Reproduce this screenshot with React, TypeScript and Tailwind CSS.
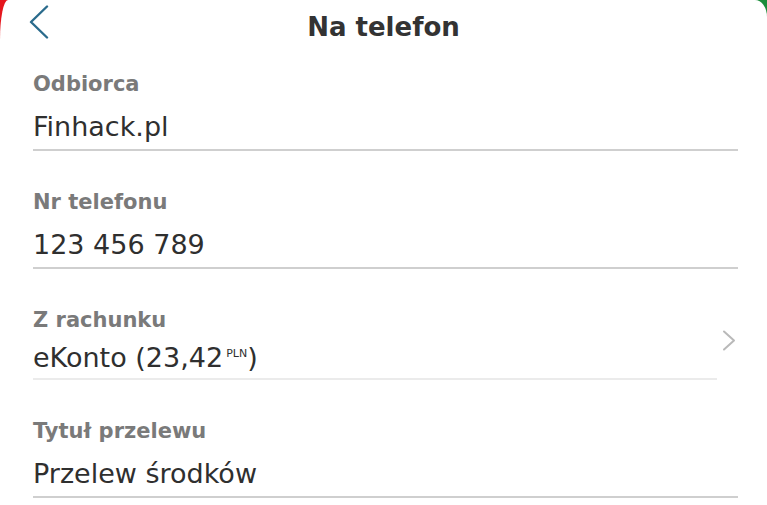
const font = { fontFamily: '"DejaVu Sans", Inter, sans-serif' };

function Field({ label, children }: { label: string; children: React.ReactNode }) {
  return (
    <div className="border-b-2 border-[#cfcfcf] pb-[6px]">
      <div className="text-[21px] leading-[28px] font-semibold text-[#7a7a7a]">{label}</div>
      <div className="mt-[13px] text-[27px] leading-[32px] text-[#2f2f2f]">{children}</div>
    </div>
  );
}

export default function App() {
  return (
    <div className="w-[767px] h-[505px] overflow-hidden bg-[linear-gradient(to_right,#e5161d_50%,#1b8c3b_50%)]" style={font}>
      <div className="h-full bg-white rounded-tl-[8px_40px] rounded-tr-[12px_17px]">
        {/* Header */}
        <div className="relative h-[54px] flex items-center justify-center">
          <button className="absolute left-[29px] top-[5px] text-[#2a6b8c]">
            <svg width="20" height="34" viewBox="0 0 20 34" fill="none" stroke="currentColor" strokeWidth="2.4" strokeLinecap="round" strokeLinejoin="round">
              <polyline points="18,1.5 2,17 18,32.5" />
            </svg>
          </button>
          <h1 className="text-[26px] font-semibold text-[#333333] leading-none">Na telefon</h1>
        </div>

        <div className="pl-[33px] pr-[29px] pt-[16px] flex flex-col gap-[37px]">
          <Field label="Odbiorca">Finhack.pl</Field>
          <Field label="Nr telefonu">123 456 789</Field>

          {/* Account selector */}
          <div className="flex items-start">
            <div className="flex-1 border-b-2 border-[#ebebeb] pb-[4px]">
              <div className="text-[21px] leading-[28px] font-semibold text-[#7a7a7a]">Z rachunku</div>
              <div className="mt-[8px] text-[27px] leading-[32px] text-[#2f2f2f]">
                eKonto (23,42
                <sup className="text-[11px] ml-[3px] -top-[0.9em]">PLN</sup>)
              </div>
            </div>
            <svg className="mt-[24px] ml-[5px] mr-[2px] text-[#b9b9b9]" width="14" height="21" viewBox="0 0 14 21" fill="none" stroke="currentColor" strokeWidth="2" strokeLinecap="round" strokeLinejoin="round">
              <polyline points="2,1.5 12,10.5 2,19.5" />
            </svg>
          </div>

          <Field label="Tytuł przelewu">Przelew środków</Field>
        </div>
      </div>
    </div>
  );
}
